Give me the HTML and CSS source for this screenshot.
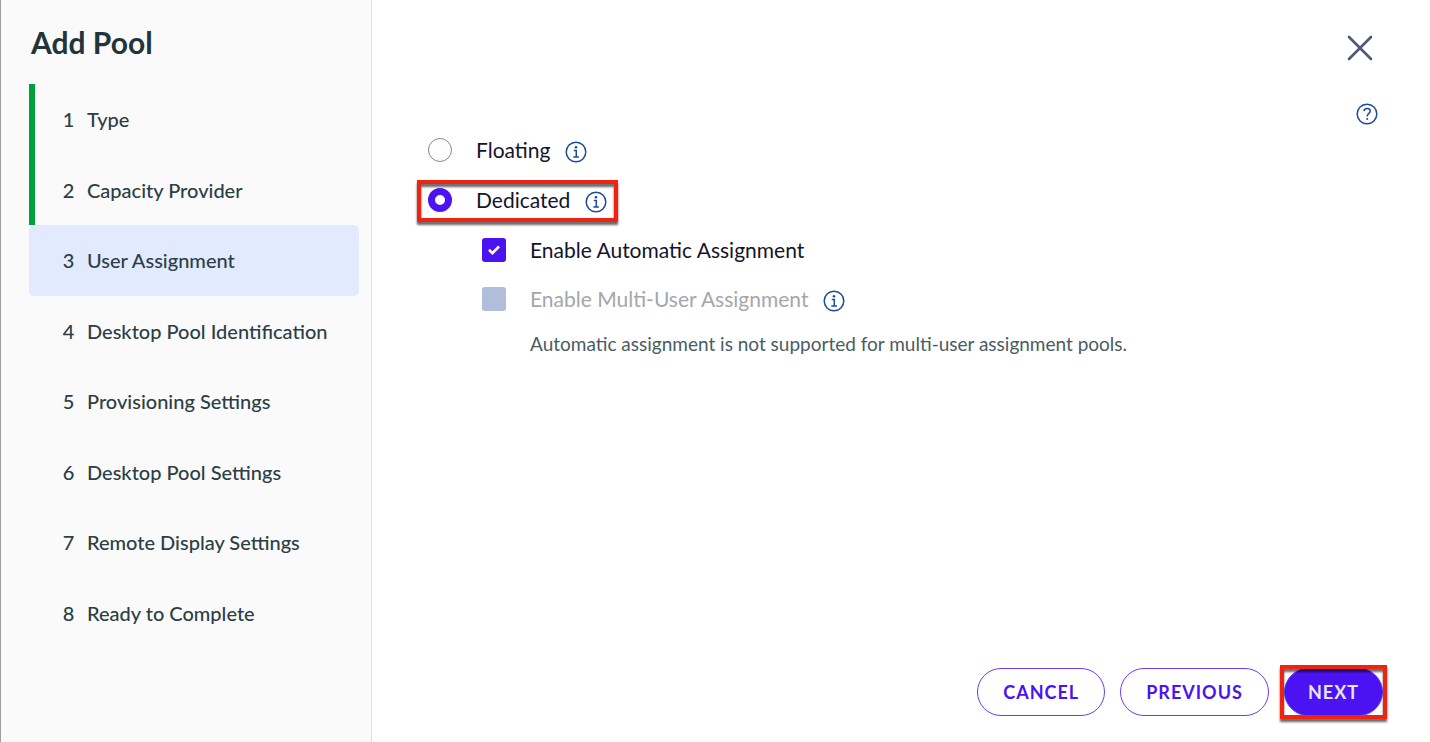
FILE: index.html
```html
<!DOCTYPE html>
<html lang="en">
<head>
<meta charset="utf-8">
<meta name="viewport" content="width=device-width, initial-scale=1">
<title>Add Pool</title>
<link rel="stylesheet" href="styles.css">
</head>
<body>
<svg class="sprite" aria-hidden="true">
  <symbol id="info" viewBox="0 0 22 22">
    <circle cx="11" cy="11" r="9.8" fill="none" stroke="currentColor" stroke-width="1.5"/>
    <circle cx="11" cy="6.2" r="1.3" fill="currentColor"/>
    <path d="M8.8 9.6h2.5v6.4M8.3 16.1h5.6" fill="none" stroke="currentColor" stroke-width="1.5"/>
  </symbol>
</svg>
<div class="wizard">
  <nav class="sidebar" aria-label="Steps">
    <h1 class="title">Add Pool</h1>
    <ol class="steps">
      <li class="step done"><button class="step-button" type="button"><span class="number">1</span>Type</button></li>
      <li class="step done"><button class="step-button" type="button"><span class="number">2</span>Capacity Provider</button></li>
      <li class="step current"><button class="step-button" type="button" aria-current="step"><span class="number">3</span>User Assignment</button></li>
      <li class="step"><button class="step-button" type="button"><span class="number">4</span>Desktop Pool Identification</button></li>
      <li class="step"><button class="step-button" type="button"><span class="number">5</span>Provisioning Settings</button></li>
      <li class="step"><button class="step-button" type="button"><span class="number">6</span>Desktop Pool Settings</button></li>
      <li class="step"><button class="step-button" type="button"><span class="number">7</span>Remote Display Settings</button></li>
      <li class="step"><button class="step-button" type="button"><span class="number">8</span>Ready to Complete</button></li>
    </ol>
  </nav>
  <main class="content">
    <header class="top">
      <button class="icon-button close" type="button" aria-label="Close">
        <svg class="close-icon" viewBox="0 0 26 26"><path d="M2 2l22 22M24 2L2 24" fill="none" stroke="currentColor" stroke-width="2.6" stroke-linecap="round"/></svg>
      </button>
      <button class="icon-button help" type="button" aria-label="Help">
        <svg class="info-icon" viewBox="0 0 22 22"><circle cx="11" cy="11" r="9.8" fill="none" stroke="currentColor" stroke-width="1.5"/><path d="M7.9 8.2C8.2 6.4 9.4 5.5 11.2 5.5c1.9 0 3.1 1 3.1 2.6 0 2.3-3.1 2.4-3.1 5.3" fill="none" stroke="currentColor" stroke-width="1.5"/><circle cx="11.2" cy="16" r="1" fill="currentColor"/></svg>
      </button>
    </header>
    <form class="options" id="assignment">
      <div class="option">
        <input class="radio" type="radio" name="type" id="floating">
        <label for="floating">Floating</label>
        <button class="icon-button info" type="button" aria-label="About floating"><svg class="info-icon"><use href="#info"/></svg></button>
      </div>
      <div class="option marked">
        <input class="radio" type="radio" name="type" id="dedicated" checked>
        <label for="dedicated">Dedicated</label>
        <button class="icon-button info" type="button" aria-label="About dedicated"><svg class="info-icon"><use href="#info"/></svg></button>
      </div>
      <div class="option nested">
        <span class="check">
          <input class="checkbox" type="checkbox" id="automatic" checked>
          <svg class="tick" viewBox="0 0 24 24"><path d="M7 11.8l3.4 3.3 6.6-6.6" fill="none" stroke="currentColor" stroke-width="2.6"/></svg>
        </span>
        <label for="automatic">Enable Automatic Assignment</label>
      </div>
      <div class="option nested">
        <span class="check"><input class="checkbox" type="checkbox" id="multi" aria-describedby="multi-note" disabled></span>
        <label class="disabled" for="multi">Enable Multi-User Assignment</label>
        <button class="icon-button info" type="button" aria-label="About multi-user assignment"><svg class="info-icon"><use href="#info"/></svg></button>
      </div>
      <p class="note" id="multi-note">Automatic assignment is not supported for multi-user assignment pools.</p>
    </form>
    <footer class="actions">
      <button class="button" type="button">CANCEL</button>
      <button class="button" type="button">PREVIOUS</button>
      <span class="marked next"><button class="button primary" type="submit" form="assignment">NEXT</button></span>
    </footer>
  </main>
</div>
</body>
</html>
```
FILE: styles.css
```css
* { box-sizing: border-box; }
body {
  margin: 0;
  font-family: Lato, "Open Sans", sans-serif;
  color: #14142b;
  background: #fff;
}
button { font: inherit; cursor: pointer; }
.sprite { position: absolute; width: 0; height: 0; }
.wizard { display: flex; min-height: 100vh; }

.sidebar {
  flex: 0 0 372px;
  padding: 24px 12px 24px 28px;
  background: #fafafa;
  border-left: 1px solid #a0a0a0;
  border-right: 1px solid #dedede;
}
.title {
  margin: 0 0 24px 2px;
  font-size: 30px;
  line-height: 36px;
  font-weight: 700;
  color: #22343c;
}
.steps {
  display: grid;
  grid-template-rows: repeat(8, 1fr);
  min-height: 564px;
  margin: 0;
  padding: 0;
  list-style: none;
}
.step { display: flex; border-left: 6px solid transparent; }
.step.done { border-left-color: #00a03c; }
.step.current {
  border-left-color: #e1eafe;
  border-radius: 5px;
  background: #e1eafe;
}
.step-button {
  display: flex;
  align-items: center;
  gap: 12px;
  width: 100%;
  padding: 0 0 0 27px;
  border: 0;
  background: none;
  color: #2c3e46;
  font-size: 20px;
  line-height: 24px;
  font-weight: 500;
  text-align: left;
}
.number { width: 13px; text-align: center; }

.content {
  display: flex;
  flex: 1;
  flex-direction: column;
  min-width: 0;
  padding: 35px 47px 26px 56px;
}
.top {
  display: flex;
  flex-direction: column;
  align-items: flex-end;
  gap: 42px;
}
.icon-button {
  display: flex;
  padding: 0;
  border: 0;
  background: none;
  color: #1f4b99;
}
.close { margin-right: 10px; color: #4a5a78; }
.help { margin-right: 5px; }
.close-icon { width: 26px; height: 26px; }
.info-icon { width: 22px; height: 22px; }

.options { display: flex; flex-direction: column; align-items: flex-start; }
.option {
  display: flex;
  align-items: center;
  height: 50px;
  font-size: 21px;
  line-height: 26px;
}
.radio, .checkbox {
  appearance: none;
  width: 24px;
  height: 24px;
  margin: 0;
}
.radio { border: 1px solid #7b8b92; border-radius: 50%; }
.radio:checked { border: 7px solid #4b12f2; }
.checkbox { border-radius: 3px; }
.checkbox:checked { background: #4b12f2; }
.checkbox:disabled { background: #b0bddb; }
.option label { margin-left: 24px; }
.option .disabled { color: #a3a7ae; }
.info { margin: 4px 0 0 15px; }
.option.nested { height: 49px; margin-left: 54px; }
.check { position: relative; display: flex; }
.tick {
  position: absolute;
  inset: 0;
  color: #fff;
  pointer-events: none;
}
.note {
  margin: 9px 0 0 102px;
  font-size: 19px;
  line-height: 24px;
  color: #4a5c63;
}

.marked { position: relative; }
.marked::after {
  content: "";
  position: absolute;
  inset: 5px -11px 3px;
  border: 4px solid #f02310;
  filter: drop-shadow(0 3px 1px rgba(0, 0, 0, 0.6));
  pointer-events: none;
}
.next::after { inset: -3px -4px; }

.actions {
  display: flex;
  justify-content: flex-end;
  gap: 15px;
  margin-top: auto;
}
.button {
  height: 48px;
  padding: 0 25px;
  border: 1px solid #6a3cf5;
  border-radius: 24px;
  background: #fff;
  color: #4b12f2;
  font-size: 18px;
  font-weight: 700;
  letter-spacing: 1px;
}
.primary { padding: 0 23px; background: #4b12f2; color: #e8e4ff; }
```
